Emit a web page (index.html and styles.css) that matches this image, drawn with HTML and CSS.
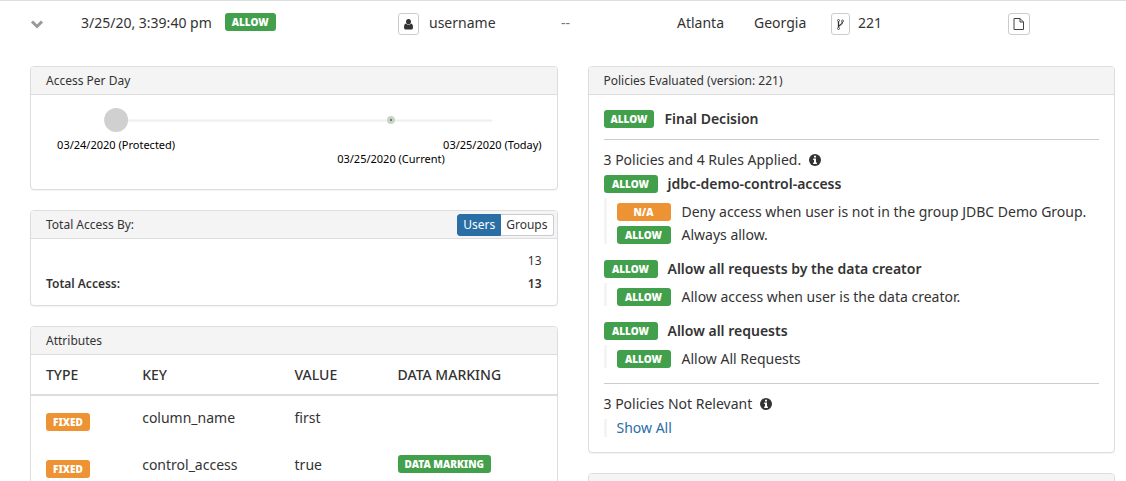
FILE: index.html
```html
<!DOCTYPE html>
<html lang="en">
<head>
<meta charset="utf-8">
<title>Access audit</title>
<link rel="stylesheet" href="styles.css">
</head>
<body>
<header class="record">
  <button class="toggle" type="button" aria-label="Collapse" aria-expanded="true">
    <svg width="14" height="10" viewBox="0 0 14 10"><path d="M2 1.500 L7 6.500 L12 1.500" fill="none" stroke="#999" stroke-width="3"/></svg>
  </button>
  <div class="cell cell-date"><span>3/25/20, 3:39:40 pm</span><span class="badge">ALLOW</span></div>
  <div class="cell">
    <button class="icon-btn" type="button" aria-label="User">
      <svg width="9" height="11" viewBox="0 0 9 11" fill="#333"><path d="M4.500 0C6.200 0 7 1.300 7 2.800S6 5.600 4.500 5.600 2 4.300 2 2.800 2.800 0 4.500 0z"/><path d="M1.900 4.600C.5 5 0 6.500 0 8.500 0 9.900.8 10.600 1.900 10.600h5.200C8.200 10.600 9 9.900 9 8.500 9 6.500 8.500 5 7.100 4.600 6.400 5.500 5.500 6 4.500 6S2.600 5.500 1.900 4.600z"/></svg>
    </button>
    <span>username</span>
  </div>
  <div class="cell muted">--</div>
  <div class="cell">Atlanta</div>
  <div class="cell">Georgia</div>
  <div class="cell cell-version">
    <button class="icon-btn icon-btn-narrow" type="button" aria-label="Version">
      <svg width="7" height="11" viewBox="0 0 7 11" fill="none" stroke="#333"><circle cx="1.500" cy="1.500" r="1" stroke-width=".8"/><circle cx="5.500" cy="2" r="1" stroke-width=".8"/><circle cx="1.500" cy="9.500" r="1" stroke-width=".8"/><path d="M1.500 2.500v6M5.500 3c0 3-3.900 2.800-4 5" stroke-width="1.300"/></svg>
    </button>
    <span>221</span>
  </div>
  <div class="cell">
    <button class="icon-btn icon-btn-wide" type="button" aria-label="Document">
      <svg width="12" height="14" viewBox="0 0 12 14" fill="none" stroke="#444"><path d="M1 1.500h6L10.500 5v7.500H1zM7 1.500V5h3.500"/></svg>
    </button>
  </div>
</header>

<main class="details">
  <div class="column">
    <section class="panel">
      <h2 class="panel-head">Access Per Day</h2>
      <svg class="timeline" role="img" aria-label="Access per day timeline">
        <line class="track" x1="16.2%" y1="25.500" x2="87.8%" y2="25.500"/>
        <circle class="dot" cx="16.2%" cy="25" r="12"/>
        <circle class="dot" cx="68.5%" cy="25" r="4"/>
        <circle class="dot-now" cx="68.5%" cy="25" r="1.200"/>
        <text x="16.2%" y="54">03/24/2020 (Protected)</text>
        <text x="68.5%" y="68">03/25/2020 (Current)</text>
        <text x="87.8%" y="54">03/25/2020 (Today)</text>
      </svg>
    </section>

    <section class="panel">
      <div class="panel-head">
        <h2 class="panel-title">Total Access By:</h2>
        <div class="switch" role="group" aria-label="Total access by">
          <button class="switch-btn active" type="button" aria-pressed="true">Users</button>
          <button class="switch-btn" type="button" aria-pressed="false">Groups</button>
        </div>
      </div>
      <div class="totals">
        <div class="total-row"><span></span><span>13</span></div>
        <div class="total-row strong"><span>Total Access:</span><span>13</span></div>
      </div>
    </section>

    <section class="panel">
      <h2 class="panel-head">Attributes</h2>
      <table class="attributes">
        <thead>
          <tr><th class="col-type">TYPE</th><th class="col-key">KEY</th><th class="col-value">VALUE</th><th>DATA MARKING</th></tr>
        </thead>
        <tbody>
          <tr><td class="type"><span class="badge orange">FIXED</span></td><td>column_name</td><td>first</td><td></td></tr>
          <tr><td class="type"><span class="badge orange">FIXED</span></td><td>control_access</td><td>true</td><td><span class="badge">DATA MARKING</span></td></tr>
        </tbody>
      </table>
    </section>
  </div>

  <div class="column">
    <section class="panel">
      <h2 class="panel-head">Policies Evaluated (version: 221)</h2>
      <div class="policies">
        <div class="line strong"><span class="badge">ALLOW</span><span>Final Decision</span></div>
        <div class="group">
          <div class="summary">
            <span>3 Policies and 4 Rules Applied.</span>
            <svg class="info" viewBox="0 0 12 12"><circle cx="6" cy="6" r="6" fill="#333"/><path d="M5 1.800h2v1.700H5zM4.200 4.600H7v4h.9V10H4.200V8.600H5V6h-.8z" fill="#fff"/></svg>
          </div>
          <div class="policy">
            <div class="line strong"><span class="badge fixed">ALLOW</span><span>jdbc-demo-control-access</span></div>
            <div class="rules">
              <div class="line"><span class="badge fixed orange">N/A</span><span>Deny access when user is not in the group JDBC Demo Group.</span></div>
              <div class="line"><span class="badge fixed">ALLOW</span><span>Always allow.</span></div>
            </div>
          </div>
          <div class="policy">
            <div class="line strong"><span class="badge fixed">ALLOW</span><span>Allow all requests by the data creator</span></div>
            <div class="rules">
              <div class="line"><span class="badge fixed">ALLOW</span><span>Allow access when user is the data creator.</span></div>
            </div>
          </div>
          <div class="policy">
            <div class="line strong"><span class="badge fixed">ALLOW</span><span>Allow all requests</span></div>
            <div class="rules">
              <div class="line"><span class="badge fixed">ALLOW</span><span>Allow All Requests</span></div>
            </div>
          </div>
        </div>
        <div class="group">
          <div class="summary">
            <span>3 Policies Not Relevant</span>
            <svg class="info" viewBox="0 0 12 12"><circle cx="6" cy="6" r="6" fill="#333"/><path d="M5 1.800h2v1.700H5zM4.200 4.600H7v4h.9V10H4.200V8.600H5V6h-.8z" fill="#fff"/></svg>
          </div>
          <div class="more"><a href="#all">Show All</a></div>
        </div>
      </div>
    </section>
    <section class="panel"><div class="panel-head"></div></section>
  </div>
</main>
</body>
</html>
```
FILE: styles.css
```css
* { box-sizing: border-box; }

body {
  margin: 0;
  height: 100vh;
  overflow: hidden;
  background: #fff;
  color: #333;
  font: 14px/20px "Noto Sans", "Open Sans", sans-serif;
}

h2 { margin: 0; font-weight: 400; }
button { font: inherit; color: inherit; cursor: pointer; }
svg { display: block; }
.strong { font-weight: 600; }
.muted { color: #777; }

.record {
  display: grid;
  grid-template-columns: 51px 317fr 163fr 116fr 77fr 77fr 177fr 118fr;
  align-items: start;
  padding: 12px 0 31px 30px;
  border-top: 1px solid #ddd;
}
.toggle { width: 14px; padding: 7px 0 0; border: 0; background: none; }
.cell { display: flex; align-items: flex-start; gap: 10px; white-space: nowrap; }
.cell-date { gap: 13px; }
.cell-version { gap: 8px; }

.icon-btn {
  display: flex;
  align-items: center;
  justify-content: center;
  width: 21px;
  height: 22px;
  padding: 0;
  border: 1px solid #ccc;
  border-radius: 3px;
  background: #fff;
}
.icon-btn-narrow { width: 19px; }
.icon-btn-wide { width: 22px; }

.badge {
  display: block;
  width: fit-content;
  padding: 0 7px;
  border-radius: 3px;
  background: #429f4b;
  color: #fff;
  font-size: 10px;
  font-weight: 900;
  line-height: 18px;
  text-align: center;
  white-space: nowrap;
}
.badge.orange { background: #ed9333; }
.badge.fixed { width: 54px; flex: none; }

.details {
  display: grid;
  grid-template-columns: 1fr 1fr;
  gap: 30px;
  align-items: start;
  padding: 0 11px 0 30px;
}
.column { display: grid; gap: 20px; min-width: 0; }

.panel {
  border: 1px solid #ddd;
  border-radius: 4px;
  background: #fff;
  box-shadow: 0 1px 1px rgba(0, 0, 0, .05);
}
.panel-head {
  display: flex;
  align-items: center;
  justify-content: space-between;
  height: 28px;
  padding: 0 3px 0 15px;
  border-bottom: 1px solid #ddd;
  border-radius: 3px 3px 0 0;
  background: #f4f4f4;
  font-size: 12px;
}
.panel-title { font-size: 12px; }

.timeline { width: 100%; height: 94px; font-size: 11px; }
.timeline text { text-anchor: middle; fill: #000; }
.track { stroke: #f0eeef; stroke-width: 2; }
.dot { fill: #d0d0d0; }
.dot-now { fill: #429f4b; }

.switch { display: flex; }
.switch-btn {
  height: 22px;
  padding: 0 5px;
  border: 1px solid #ccc;
  border-left: 0;
  border-radius: 0 3px 3px 0;
  background: #fff;
  font-size: 12px;
  line-height: 20px;
}
.switch-btn.active {
  border: 1px solid #2e6da4;
  border-radius: 3px 0 0 3px;
  background: #2a6ea6;
  color: #fff;
}

.totals { padding: 10px 15px; font-size: 12px; line-height: 23px; }
.total-row { display: flex; justify-content: space-between; }

.attributes { width: 100%; table-layout: fixed; border-collapse: collapse; }
.attributes th, .attributes td { padding: 12px 0 15px 15px; text-align: left; vertical-align: top; }
.attributes th { padding: 10px 0 9px 15px; border-bottom: 2px solid #ddd; font-weight: 500; }
.attributes .type { padding-top: 17px; padding-bottom: 12px; }
.col-type { width: 18.3%; }
.col-key { width: 29%; }
.col-value { width: 19.6%; }

.policies { padding: 15px; }
.line { display: flex; align-items: center; gap: 10px; height: 18px; white-space: nowrap; }
.group { margin-top: 11px; padding-top: 10px; border-top: 1px solid #ccc; }
.group + .group { margin-top: 15px; }
.summary { display: flex; align-items: center; gap: 8px; margin-bottom: 5px; }
.info { width: 12px; height: 12px; }
.policy + .policy { margin-top: 16px; }
.rules { margin-top: 5px; padding-left: 10px; border-left: 3px solid #f4f4f4; }
.rules .line { gap: 11px; height: 23px; padding-top: 5px; }
.more { padding-left: 10px; border-left: 3px solid #f4f4f4; line-height: 18px; }
a { color: #2a6ea6; text-decoration: none; }
```
